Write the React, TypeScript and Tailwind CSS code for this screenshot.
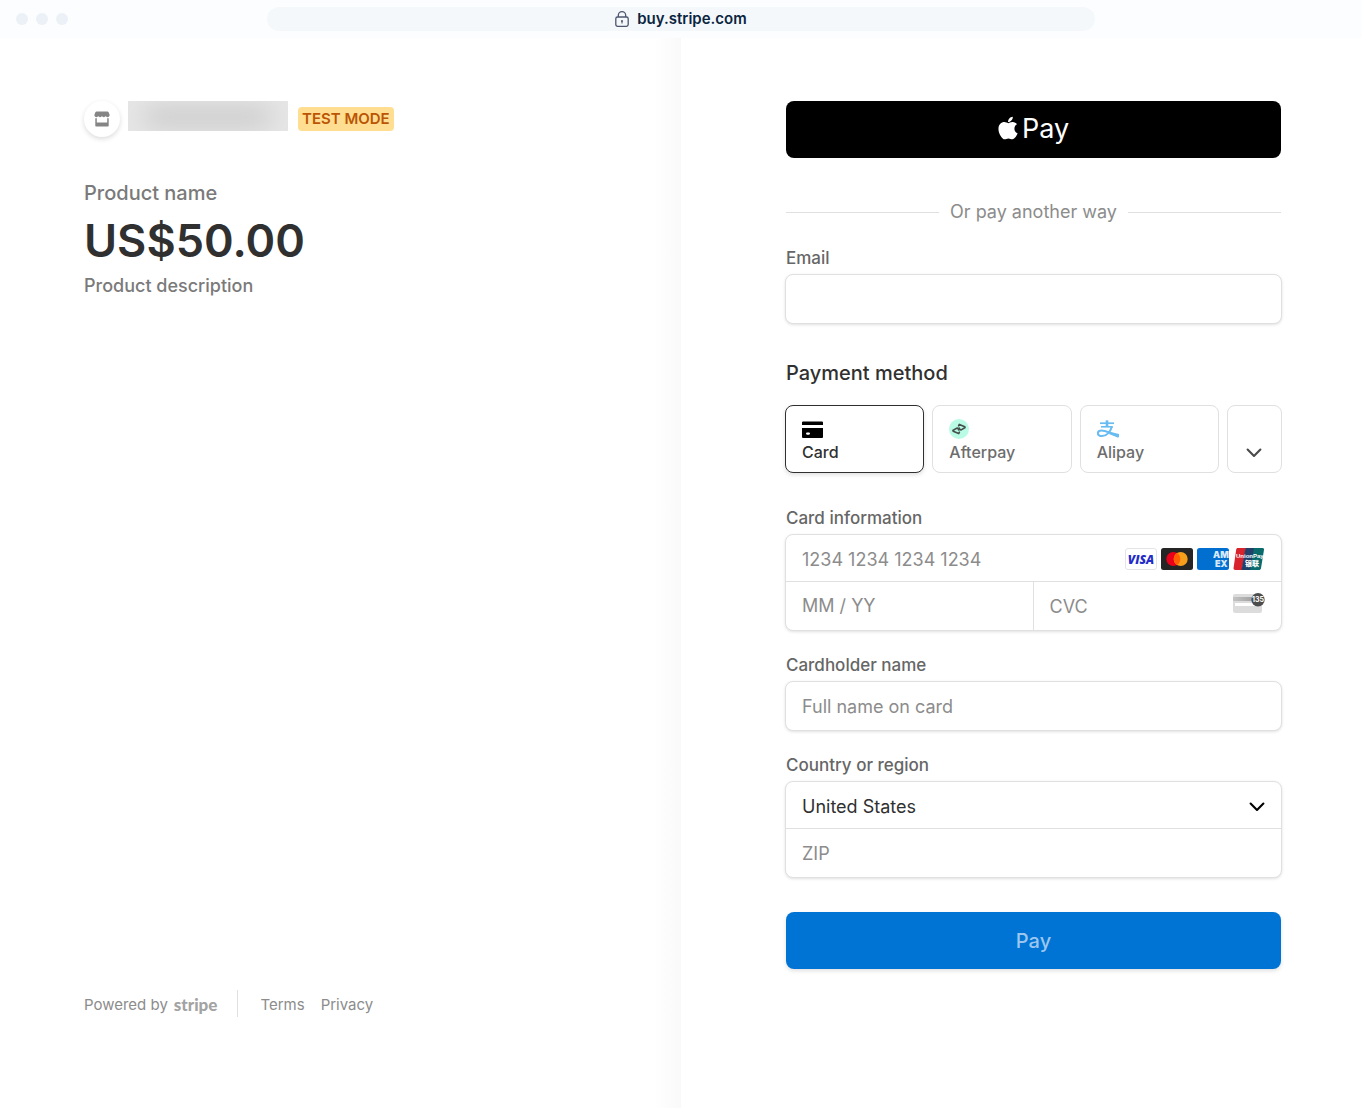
import type { ReactNode } from 'react';
import { FaApple } from 'react-icons/fa';

const inputStyle =
  'block w-full min-w-0 bg-transparent px-4 text-lg text-[#303030] placeholder:text-[#8c8c8c] outline-none';
const boxStyle =
  'rounded-lg border border-[#e0e0e0] bg-white shadow-[0_1px_3px_rgba(0,0,0,0.12)]';
const labelStyle = 'block text-[17px] leading-6 font-medium text-[#666666]';

function Chevron({ className }: { className?: string }) {
  return (
    <svg
      viewBox="0 0 16 10"
      className={className}
      fill="none"
      stroke="currentColor"
      strokeWidth="2.1"
      strokeLinecap="round"
      strokeLinejoin="round"
      aria-hidden="true"
    >
      <path d="M1.6 1.5 8 8l6.4-6.5" />
    </svg>
  );
}

function LockIcon() {
  return (
    <svg viewBox="0 0 14 17" className="h-[17px] w-3.5" fill="none" stroke="#4c566f" strokeWidth="1.3" aria-hidden="true">
      <path d="M3.3 6V4.400a3.700 3.700 0 0 1 7.400 0V6" />
      <rect x="0.8" y="6" width="12.4" height="9.4" rx="1.8" />
      <circle cx="7" cy="10" r="1" fill="#4c566f" stroke="none" />
      <path d="M7 10v2.6" strokeWidth="1.1" />
    </svg>
  );
}

function StoreIcon() {
  return (
    <svg viewBox="0 0 16 16" className="h-4 w-4" fill="#858585" aria-hidden="true">
      <path d="M2.6 0.4h10.8c.6 0 1 .3 1.2.8l.9 2.2c.1.2.1.4.1.6 0 1.3-.9 2.2-2.1 2.2-.8 0-1.5-.5-1.8-1.2-.4.7-1.1 1.2-1.9 1.2S8.3 5.7 8 5c-.4.7-1.1 1.2-1.9 1.2S4.6 5.7 4.3 5C3.900 5.700 3.200 6.200 2.500 6.200 1.300 6.200.4 5.300.4 4c0-.2 0-.4.1-.6l.9-2.200c.2-.5.7-.8 1.2-.8Z" />
      <path d="M1.3 7.3h1.5v4.3h10.400V7.300h1.500v7.200c0 .6-.4 1-1 1H2.300c-.6 0-1-.4-1-1Z" />
    </svg>
  );
}

function CardIcon() {
  return (
    <svg viewBox="0 0 21 17" className="h-[17px] w-[21px]" aria-hidden="true">
      <path d="M1 .5h19a1 1 0 0 1 1 1V4H0V1.500a1 1 0 0 1 1-1Z" fill="#000" />
      <path d="M0 7h21v9a1 1 0 0 1-1 1H1a1 1 0 0 1-1-1Z" fill="#000" />
      <rect x="4" y="11.5" width="4" height="2.2" rx="1.1" fill="#fff" />
    </svg>
  );
}

function AfterpayIcon() {
  return (
    <svg viewBox="0 0 20 20" className="h-5 w-5" aria-hidden="true">
      <circle cx="10" cy="10" r="10" fill="#b9fbe4" />
      <g fill="none" stroke="#454f4b" strokeWidth="1.6" strokeLinejoin="round" strokeLinecap="round">
        <path d="M9.600 6.800 10.300 5.400 15.800 7.800c.4.300.4.700 0 1l-3.600 2.100-1.300-.3-.6-1.500" />
        <path d="M10.400 13.200 9.700 14.600 4.200 12.200c-.4-.3-.4-.7 0-1l3.600-2.100 1.300.3.600 1.500" />
      </g>
    </svg>
  );
}

function AlipayIcon() {
  return (
    <svg viewBox="0 0 22 18" className="h-[18px] w-[22px]" fill="none" stroke="#69bcf1" aria-hidden="true">
      <path d="M3 3.2h14" strokeWidth="1.7" />
      <path d="M10 .3v6.500" strokeWidth="2.6" />
      <path d="M4 6.800h11.800" strokeWidth="1.6" />
      <path d="M14.900 6.600c-1.400 4.600-4.900 9.500-9.900 9.500-2.600 0-4.100-1-4.100-2.800 0-1.600 1.400-2.700 3.500-2.700 4 0 7.500 2.200 17 5.200" strokeWidth="2" />
      <path d="m13 11.800 9 2.200v3.200l-1.500.3-8.500-3.600Z" fill="#69bcf1" stroke="none" />
    </svg>
  );
}

function VisaBadge() {
  return (
    <svg viewBox="0 0 32 22" className="h-[22px] w-8" role="img" aria-label="Visa">
      <rect x=".5" y=".5" width="31" height="21" rx="2.5" fill="#fff" stroke="#e4e4e8" />
      <text x="16" y="15.5" textAnchor="middle" fontFamily="Open Sans, sans-serif" fontSize="12" fontWeight="800" fontStyle="italic" fill="#232bc9">
        VISA
      </text>
    </svg>
  );
}

function MastercardBadge() {
  return (
    <svg viewBox="0 0 32 22" className="h-[22px] w-8" role="img" aria-label="Mastercard">
      <rect width="32" height="22" rx="2.5" fill="#252525" />
      <circle cx="12.3" cy="11" r="7" fill="#eb001b" />
      <circle cx="19.7" cy="11" r="7" fill="#f79e1b" />
      <path d="M16 5.060a7 7 0 0 1 0 11.880a7 7 0 0 1 0-11.880Z" fill="#ff5f00" />
    </svg>
  );
}

function AmexBadge() {
  return (
    <svg viewBox="0 0 32 22" className="h-[22px] w-8" role="img" aria-label="American Express">
      <rect width="32" height="22" rx="2.5" fill="#016fd0" />
      <g fontFamily="Inter, sans-serif" fontSize="9" fontWeight="900" fill="#d9ebfb">
        <text x="16" y="10">AM</text>
        <text x="18" y="19">EX</text>
      </g>
    </svg>
  );
}

function UnionPayBadge() {
  return (
    <svg viewBox="0 0 32 22" className="h-[22px] w-8" role="img" aria-label="UnionPay">
      <path d="M5 0h8L9 22H2.500C1 22 .3 21.200.6 19.800L3.200 1.500C3.400.5 4 0 5 0Z" fill="#d8222c" />
      <path d="M12.500 0H22l-4 22H8.500Z" fill="#21416b" />
      <path d="M21 0h8.500c1.200 0 1.700.8 1.500 1.800l-3 18.400c-.2 1.200-1 1.800-2.200 1.800H17Z" fill="#0a6b6d" />
      <text x="3" y="10" fontFamily="Liberation Sans, sans-serif" fontSize="6" fontWeight="700" fill="#fff">
        UnionPay
      </text>
      <text x="12" y="18" fontFamily="Noto Sans CJK SC, sans-serif" fontSize="7" fontWeight="900" fill="#fff">
        银联
      </text>
    </svg>
  );
}

function CvcIcon() {
  return (
    <svg viewBox="0 0 32 22" className="h-[22px] w-8" aria-hidden="true">
      <defs>
        <linearGradient id="stripe-band" x1="0" x2="1">
          <stop offset="0" stopColor="#c4c4c4" />
          <stop offset="1" stopColor="#929292" />
        </linearGradient>
      </defs>
      <rect y="1" width="29" height="19" rx="2" fill="#dcdcdc" />
      <rect y="4" width="29" height="4" fill="url(#stripe-band)" />
      <rect x="2" y="10" width="24" height="3" fill="#fff" />
      <circle cx="25" cy="6.7" r="6.7" fill="#4d4d4d" />
      <text x="25" y="9.2" textAnchor="middle" fontFamily="Inter, sans-serif" fontSize="7" fontWeight="700" fill="#fff">
        135
      </text>
    </svg>
  );
}

function MethodTab({ icon, label, selected = false }: { icon: ReactNode; label: string; selected?: boolean }) {
  return (
    <button
      type="button"
      aria-pressed={selected}
      className={
        selected
          ? 'flex h-[68px] min-w-0 flex-1 flex-col rounded-lg border border-[#303030] bg-white px-4 pt-3 text-left text-[#303030] shadow-[0_2px_4px_rgba(0,0,0,0.12)]'
          : 'flex h-[68px] min-w-0 flex-1 flex-col rounded-lg border border-[#e0e0e0] bg-white px-4 pt-3 text-left text-[#6d6d6d]'
      }
    >
      <span className="flex h-[22px] items-center">{icon}</span>
      <span className="text-base leading-6 font-medium">{label}</span>
    </button>
  );
}

function BrowserBar() {
  return (
    <header className="flex h-[38px] items-center bg-[#fcfdff] px-4">
      <div className="flex flex-1 gap-2">
        <span className="h-3 w-3 rounded-full bg-[#ebf1f6]" />
        <span className="h-3 w-3 rounded-full bg-[#ebf1f6]" />
        <span className="h-3 w-3 rounded-full bg-[#ebf1f6]" />
      </div>
      <div className="flex h-6 w-2/3 max-w-[828px] items-center justify-center gap-2 rounded-full bg-[#f5f8fb] text-[15px] font-semibold text-[#0a2540]">
        <LockIcon />
        buy.stripe.com
      </div>
      <div className="flex-1" />
    </header>
  );
}

function Summary() {
  return (
    <section className="flex flex-col justify-between bg-[linear-gradient(to_left,#f9f9f9,#ffffff_26px)] pt-[63px] pr-8 pb-[91px] pl-[84px]">
      <div>
        <div className="flex items-center">
          <div className="flex h-9 w-9 items-center justify-center rounded-full bg-white shadow-[0_2px_5px_rgba(0,0,0,0.14)]">
            <StoreIcon />
          </div>
          <div className="ml-2 h-[30px] w-40 self-start overflow-hidden bg-[#e6e6e6]">
            <div className="mx-4 mt-2 h-4 rounded-full bg-[#c4c4c4] blur-md" />
          </div>
          <span className="ml-2.5 rounded bg-[#ffde92] px-1 text-[15px] leading-6 font-semibold text-[#bb5504]">
            TEST MODE
          </span>
        </div>
        <h1 className="mt-10 text-xl leading-8 font-medium text-[#7a7a7a]">Product name</h1>
        <p className="text-[45px] leading-16 font-semibold text-[#303030]">US$50.00</p>
        <p className="text-lg leading-[26px] font-medium text-[#7a7a7a]">Product description</p>
      </div>
      <footer className="flex h-[27px] items-end text-[15px] leading-6 text-[#8c8c8c]">
        <span>Powered by</span>
        <span className="ml-1.5 font-['Lato',sans-serif] text-[17px] leading-6 font-black text-[#a3a3a3]">stripe</span>
        <span className="ml-5 h-full w-px bg-[#e0e0e0]" />
        <a href="#terms" className="ml-[22px]">Terms</a>
        <a href="#privacy" className="ml-4">Privacy</a>
      </footer>
    </section>
  );
}

function PaymentForm() {
  return (
    <form className="flex flex-col pt-[63px] pr-20 pb-16 pl-[104px]" onSubmit={(e) => e.preventDefault()}>
      <button
        type="button"
        aria-label="Apple Pay"
        className="mx-px flex h-[57px] items-center justify-center gap-1 rounded-lg bg-black text-[27px] text-white"
      >
        <FaApple className="mb-1 h-[26px] w-5" />
        Pay
      </button>

      <div className="mx-px mt-[42px] flex items-center gap-[11px] text-lg leading-6 text-[#8c8c8c]">
        <span className="h-px flex-1 bg-[#e0e0e0]" />
        Or pay another way
        <span className="h-px flex-1 bg-[#e0e0e0]" />
      </div>

      <label htmlFor="email" className={`mx-px mt-[22px] ${labelStyle}`}>Email</label>
      <div className={`mt-1 ${boxStyle}`}>
        <input id="email" type="email" className={`h-12 ${inputStyle}`} />
      </div>

      <h2 className="mx-px mt-[35px] text-xl leading-7 font-medium text-[#303030]">Payment method</h2>
      <div className="mt-[18px] flex gap-2">
        <MethodTab icon={<CardIcon />} label="Card" selected />
        <MethodTab icon={<AfterpayIcon />} label="Afterpay" />
        <MethodTab icon={<AlipayIcon />} label="Alipay" />
        <button
          type="button"
          aria-label="More payment methods"
          className="flex h-[68px] w-[55px] items-end justify-center rounded-lg border border-[#e0e0e0] bg-white pb-3.5 text-[#4a4a4a]"
        >
          <Chevron className="h-2.5 w-4" />
        </button>
      </div>

      <fieldset className="mt-[33px]">
        <legend className={`mx-px ${labelStyle}`}>Card information</legend>
        <div className={`mt-1 ${boxStyle}`}>
          <div className="flex h-[47px] items-center border-b border-[#e0e0e0] pt-0.5 pr-4">
            <input aria-label="Card number" placeholder="1234 1234 1234 1234" className={`h-full ${inputStyle}`} />
            <div className="flex shrink-0 gap-1">
              <VisaBadge />
              <MastercardBadge />
              <AmexBadge />
              <UnionPayBadge />
            </div>
          </div>
          <div className="grid h-12 grid-cols-2">
            <input aria-label="Expiration date" placeholder="MM / YY" className={`border-r border-[#e0e0e0] ${inputStyle}`} />
            <div className="flex items-center pr-4">
              <input aria-label="CVC" placeholder="CVC" className={`h-full ${inputStyle}`} />
              <span className="shrink-0 pb-1">
                <CvcIcon />
              </span>
            </div>
          </div>
        </div>
      </fieldset>

      <label htmlFor="name" className={`mx-px mt-[22px] ${labelStyle}`}>Cardholder name</label>
      <div className={`mt-1 ${boxStyle}`}>
        <input id="name" placeholder="Full name on card" className={`h-12 ${inputStyle}`} />
      </div>

      <label htmlFor="country" className={`mx-px mt-[22px] ${labelStyle}`}>Country or region</label>
      <div className={`mt-1 ${boxStyle}`}>
        <div className="relative border-b border-[#e0e0e0]">
          <select id="country" defaultValue="US" className={`h-[46px] appearance-none pt-1 ${inputStyle}`}>
            <option value="US">United States</option>
            <option value="CA">Canada</option>
          </select>
          <Chevron className="pointer-events-none absolute top-5 right-4 h-2.5 w-4 text-black" />
        </div>
        <input aria-label="ZIP" placeholder="ZIP" className={`h-12 ${inputStyle}`} />
      </div>

      <button
        type="submit"
        className="mx-px mt-[34px] h-[57px] rounded-lg bg-[#0074d4] text-xl font-medium text-[#9dc6ef] shadow-[0_2px_4px_rgba(0,0,0,0.12)]"
      >
        Pay
      </button>
    </form>
  );
}

export default function App() {
  return (
    <div className="flex min-h-screen flex-col bg-white font-['Inter',sans-serif]">
      <BrowserBar />
      <main className="grid flex-1 grid-cols-2">
        <Summary />
        <PaymentForm />
      </main>
    </div>
  );
}
